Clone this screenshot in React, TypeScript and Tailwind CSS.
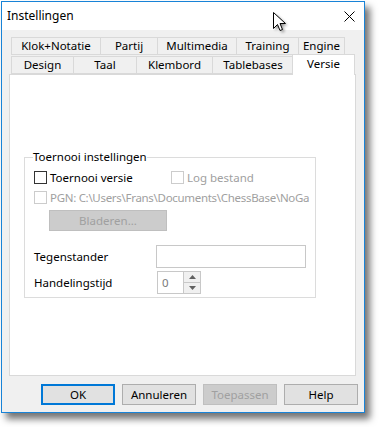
import React from "react";

const font = { fontFamily: '"Noto Sans", "Segoe UI", Arial, sans-serif' };

function Tab({ w, label, cls = "" }: { w: number; label: string; cls?: string }) {
  return (
    <div
      className={`h-[18px] border border-[#d9d9d9] -ml-px first:ml-0 flex items-center justify-center text-[11.5px] leading-none text-black bg-[#f0f0f0] whitespace-nowrap ${cls}`}
      style={{ width: w }}
    >
      {label}
    </div>
  );
}

function Box({ disabled }: { disabled?: boolean }) {
  return (
    <div
      className={`w-[13px] h-[13px] border bg-white shrink-0 ${disabled ? "border-[#cccccc]" : "border-[#333333]"}`}
    />
  );
}

function Btn({ label, variant }: { label: string; variant?: "default" | "disabled" }) {
  if (variant === "default")
    return (
      <div className="w-[74px] h-[21px] border-2 border-[#0078d7] bg-[#e1e1e1] flex items-center justify-center text-[11.5px] text-black">
        {label}
      </div>
    );
  if (variant === "disabled")
    return (
      <div className="w-[74px] h-[21px] border border-[#bfbfbf] bg-[#cccccc] flex items-center justify-center text-[11.5px] text-[#a0a0a0]">
        {label}
      </div>
    );
  return (
    <div className="w-[74px] h-[21px] border border-[#adadad] bg-[#e1e1e1] flex items-center justify-center text-[11.5px] text-black">
      {label}
    </div>
  );
}

export default function App() {
  return (
    <div className="w-[379px] h-[427px] bg-white pl-px pt-px relative overflow-hidden" style={font}>
      <div className="w-[364px] h-[412px] border border-[#1883d7] flex flex-col shadow-[5px_6px_7px_rgba(0,0,0,0.55)]">
        {/* Title bar */}
        <div className="h-[28px] bg-white flex items-center justify-between pl-[5px] pr-[9px] shrink-0">
          <span className="text-[12px] text-black">Instellingen</span>
          <svg width="11" height="11" viewBox="0 0 11 11">
            <path d="M0.5 0.5 L10.5 10.5 M10.5 0.5 L0.5 10.5" stroke="#000" strokeWidth="1" />
          </svg>
        </div>
        {/* Body */}
        <div className="flex-1 bg-[#f0f0f0] pt-[7px] pl-[7px] flex flex-col">
          {/* Tabs */}
          <div className="flex flex-col pl-[2px]">
            <div className="flex">
              <Tab w={90} label="Klok+Notatie" />
              <Tab w={58} label="Partij" />
              <Tab w={80} label="Multimedia" />
              <Tab w={63} label="Training" />
              <Tab w={47} label="Engine" />
            </div>
            <div className="flex -mt-px items-end">
              <Tab w={63} label="Design" />
              <Tab w={64} label="Taal" />
              <Tab w={77} label="Klembord" />
              <Tab w={82} label="Tablebases" />
              <div className="w-[63px] h-[21px] -ml-[2px] -mb-px border border-b-0 border-[#d9d9d9] bg-white relative z-10 flex items-start justify-center pt-[1px] text-[11.5px] leading-[16px] text-black">
                Versie
              </div>
            </div>
          </div>
          {/* Panel */}
          <div className="w-[347px] h-[302px] border border-[#d9d9d9] bg-white pl-[14px] text-[11.5px] whitespace-nowrap">
            <fieldset className="mt-[74px] w-[292px] h-[149px] border border-[#dcdcdc] pl-[8px] pr-0">
              <legend className="leading-[16px] text-black px-0">Toernooi instellingen</legend>
              <div className="flex items-center h-[13px] mt-[6px] ml-[1px]">
                <Box />
                <span className="ml-[3px] w-[118px] text-black">Toernooi versie</span>
                <div className="ml-[3px] flex items-center">
                  <Box disabled />
                  <span className="ml-[3px] text-[#a0a0a0]">Log bestand</span>
                </div>
              </div>
              <div className="flex items-center h-[13px] mt-[7px] ml-[1px]">
                <Box disabled />
                <span className="ml-[3px] text-[#a0a0a0] tracking-[-0.3px]">PGN: C:\Users\Frans\Documents\ChessBase\NoGa</span>
              </div>
              <div className="mt-[6px] ml-[16px] w-[118px] h-[21px] border border-[#bfbfbf] bg-[#cccccc] flex items-center justify-center text-[#a0a0a0]">
                Bladeren...
              </div>
              <div className="flex items-center mt-[14px]">
                <span className="w-[122px] ml-px text-black">Tegenstander</span>
                <div className="w-[150px] h-[23px] border border-[#c8c8c8] bg-white" />
              </div>
              <div className="flex items-center mt-[3px]">
                <span className="w-[123px] ml-px text-black">Handelingstijd</span>
                <div className="w-[44px] h-[23px] border border-[#c8c8c8] bg-white flex">
                  <div className="flex-1 flex items-center pl-[4px] text-[#7a7a7a]">0</div>
                  <div className="w-[17px] flex flex-col border-l border-[#c8c8c8]">
                    <div className="flex-1 bg-[#f0f0f0] border-b border-[#c8c8c8] flex items-center justify-center">
                      <svg width="7" height="4" viewBox="0 0 7 4"><path d="M3.5 0 L7 4 L0 4 Z" fill="#606060" /></svg>
                    </div>
                    <div className="flex-1 bg-[#f0f0f0] flex items-center justify-center">
                      <svg width="7" height="4" viewBox="0 0 7 4"><path d="M0 0 L7 0 L3.5 4 Z" fill="#606060" /></svg>
                    </div>
                  </div>
                </div>
              </div>
            </fieldset>
          </div>
          {/* Buttons */}
          <div className="flex gap-[7px] mt-[8px] ml-[32px]">
            <Btn label="OK" variant="default" />
            <Btn label="Annuleren" />
            <Btn label="Toepassen" variant="disabled" />
            <Btn label="Help" />
          </div>
        </div>
      </div>
      {/* mouse cursor */}
      <svg className="absolute left-[272px] top-[11px]" width="20" height="24" viewBox="0 0 20 24">
        <defs>
          <filter id="sh" x="-50%" y="-50%" width="200%" height="200%">
            <feGaussianBlur stdDeviation="1.5" />
          </filter>
        </defs>
        <path d="M3.5 3.5 L3.5 19.5 L7.5 15.5 L10 21.5 L12.5 20.5 L10 14.5 L15.5 14.5 Z" fill="#000" opacity="0.45" filter="url(#sh)" />
        <path d="M1.5 1.5 L1.5 17.5 L5.5 13.5 L8 19.5 L10.5 18.5 L8 12.5 L13.5 12.5 Z" fill="#fff" stroke="#000" strokeWidth="1" strokeLinejoin="miter" />
      </svg>
    </div>
  );
}
